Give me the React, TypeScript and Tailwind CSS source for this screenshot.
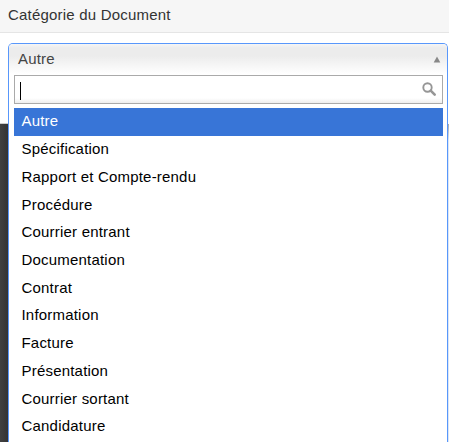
const categories = [
  'Autre',
  'Spécification',
  'Rapport et Compte-rendu',
  'Procédure',
  'Courrier entrant',
  'Documentation',
  'Contrat',
  'Information',
  'Facture',
  'Présentation',
  'Courrier sortant',
  'Candidature',
];

function SearchIcon() {
  return (
    <svg width="15" height="15" viewBox="0 0 15 15" fill="none" stroke="#969696">
      <circle cx="5.5" cy="5.5" r="4.2" strokeWidth="1.9" />
      <path d="M8.7 8.7L12.7 12.7" strokeWidth="2.6" strokeLinecap="round" />
    </svg>
  );
}

function CategorySelect() {
  return (
    <div className="mt-[10px] flex w-[440px] shrink-0 flex-col rounded-t-[5px] border border-b-0 border-[#5897fb] bg-white">
      <div className="flex h-[31px] shrink-0 items-center justify-between rounded-t-[4px] bg-[linear-gradient(to_bottom,#f6f6f6_0px,#ececec_4px,#ececec_12px,#ffffff_30px)] pr-[6px] pl-[9px] text-[#444]">
        <span className="pb-[2px] leading-[28px]">Autre</span>
        <svg width="8" height="7" viewBox="0 0 8 7">
          <path d="M4 0.5L7.3 6.5H0.7Z" fill="#888888" />
        </svg>
      </div>
      <div className="mr-[4px] ml-[5px] flex h-[29px] shrink-0 items-center justify-between border border-[#aaaaaa] bg-[linear-gradient(to_top,#eeeeee_0px,#ffffff_5px)] pr-[5px] pl-[5px]">
        <span className="mt-[3px] h-[18px] w-px bg-black" />
        <SearchIcon />
      </div>
      <ul className="mt-[4.4px] mr-[4px] ml-[5px]">
        {categories.map((name, i) => (
          <li
            key={name}
            className={
              i === 0
                ? 'h-[27.72px] bg-[#3875d7] pl-[7.5px] leading-[26px] text-white'
                : 'h-[27.72px] pl-[7.5px] leading-[26px] text-black'
            }
          >
            {name}
          </li>
        ))}
      </ul>
    </div>
  );
}

export default function App() {
  return (
    <div className="flex h-[442px] w-[449px] flex-col overflow-hidden bg-white font-['Liberation_Sans',Arial,sans-serif] text-[15px] tracking-[0.2px]">
      <header className="h-[33px] shrink-0 border-b border-[#e5e5e5] bg-[#f6f6f6] pl-2 leading-[30px] text-[#333]">
        Catégorie du Document
      </header>
      <main className="flex min-h-0 flex-1">
        <div className="flex w-2 shrink-0 flex-col">
          <div className="h-[91px] shrink-0 border-b border-[#cccccc]" />
          <div className="flex-1 bg-[linear-gradient(to_right,#414141,#343434)]" />
        </div>
        <CategorySelect />
        <div className="flex w-px shrink-0 flex-col pt-[91px]">
          <div className="h-4 bg-[linear-gradient(to_bottom,#aaaaaa,#dce6f5)]" />
          <div className="flex-1 bg-[#dce6f5]" />
        </div>
      </main>
    </div>
  );
}
